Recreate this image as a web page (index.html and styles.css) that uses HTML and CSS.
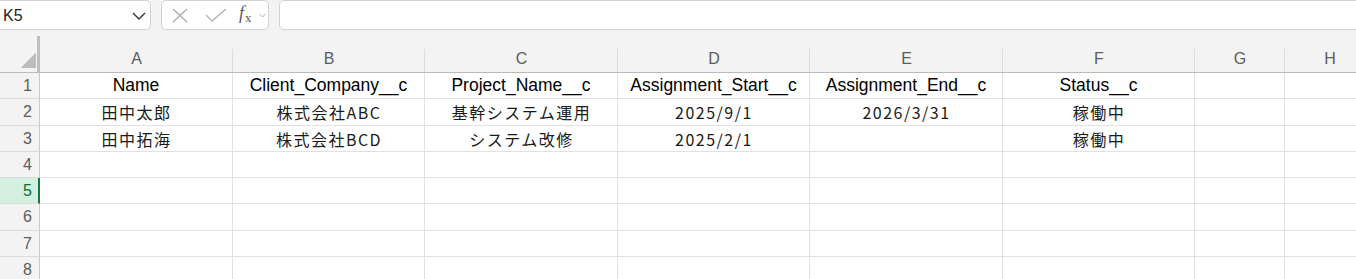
FILE: index.html
```html
<!DOCTYPE html>
<html lang="ja">
<head>
<meta charset="utf-8">
<title>Sheet</title>
<link rel="stylesheet" href="styles.css">
</head>
<body>
<div class="formula-bar">
  <div class="name-box">
    <span class="name-text">K5</span>
    <svg class="name-chevron" width="14" height="8" viewBox="0 0 14 8"><polyline points="1,1 7,7 13,1" fill="none" stroke="#333" stroke-width="1.4"/></svg>
  </div>
  <div class="fx-box">
    <svg class="ic-x" width="16" height="15" viewBox="0 0 16 15"><path d="M1 1 L15 14 M15 1 L1 14" stroke="#adadad" stroke-width="1.3" fill="none"/></svg>
    <svg class="ic-check" width="22" height="15" viewBox="0 0 22 15"><polyline points="1,7 7,13 21,1" fill="none" stroke="#b4b4b4" stroke-width="1.3"/></svg>
    <span class="fx"><i>f</i><sub>x</sub></span>
    <svg class="ic-small" width="7" height="5" viewBox="0 0 7 5"><polyline points="0.5,0.8 3.5,4 6.5,0.8" fill="none" stroke="#b0b0b0" stroke-width="1"/></svg>
  </div>
  <div class="formula-input"></div>
</div>
<div class="sheet">
  <div class="corner"></div>
  <div class="col-h">A</div>
  <div class="col-h">B</div>
  <div class="col-h">C</div>
  <div class="col-h">D</div>
  <div class="col-h">E</div>
  <div class="col-h">F</div>
  <div class="col-h">G</div>
  <div class="col-h">H</div>

  <div class="row-h">1</div>
  <div class="cell head">Name</div>
  <div class="cell head">Client_Company__c</div>
  <div class="cell head">Project_Name__c</div>
  <div class="cell head">Assignment_Start__c</div>
  <div class="cell head">Assignment_End__c</div>
  <div class="cell head">Status__c</div>
  <div class="cell"></div>
  <div class="cell"></div>

  <div class="row-h">2</div>
  <div class="cell jp">田中太郎</div>
  <div class="cell jp">株式会社ABC</div>
  <div class="cell jp">基幹システム運用</div>
  <div class="cell jp">2025/9/1</div>
  <div class="cell jp">2026/3/31</div>
  <div class="cell jp">稼働中</div>
  <div class="cell"></div>
  <div class="cell"></div>

  <div class="row-h">3</div>
  <div class="cell jp">田中拓海</div>
  <div class="cell jp">株式会社BCD</div>
  <div class="cell jp">システム改修</div>
  <div class="cell jp">2025/2/1</div>
  <div class="cell jp"></div>
  <div class="cell jp">稼働中</div>
  <div class="cell"></div>
  <div class="cell"></div>

  <div class="row-h">4</div>
  <div class="cell"></div><div class="cell"></div><div class="cell"></div><div class="cell"></div><div class="cell"></div><div class="cell"></div><div class="cell"></div><div class="cell"></div>

  <div class="row-h active">5</div>
  <div class="cell"></div><div class="cell"></div><div class="cell"></div><div class="cell"></div><div class="cell"></div><div class="cell"></div><div class="cell"></div><div class="cell"></div>

  <div class="row-h">6</div>
  <div class="cell"></div><div class="cell"></div><div class="cell"></div><div class="cell"></div><div class="cell"></div><div class="cell"></div><div class="cell"></div><div class="cell"></div>

  <div class="row-h">7</div>
  <div class="cell"></div><div class="cell"></div><div class="cell"></div><div class="cell"></div><div class="cell"></div><div class="cell"></div><div class="cell"></div><div class="cell"></div>

  <div class="row-h">8</div>
  <div class="cell"></div><div class="cell"></div><div class="cell"></div><div class="cell"></div><div class="cell"></div><div class="cell"></div><div class="cell"></div><div class="cell"></div>
</div>
</body>
</html>
```

FILE: styles.css
```css
* { box-sizing: border-box; }
html, body {
  margin: 0;
  padding: 0;
  background: #ffffff;
  overflow: hidden;
  width: 1356px;
  height: 279px;
}
body {
  font-family: "Liberation Sans", Arial, sans-serif;
  color: #000;
}

.formula-bar {
  height: 36px;
  background: #f3f3f3;
  display: flex;
  align-items: flex-start;
}
.name-box {
  margin-left: -8px;
  width: 159px;
  height: 30px;
  background: #fff;
  border: 1px solid #d2d2d2;
  border-radius: 5px;
  display: flex;
  align-items: center;
  padding-left: 10px;
  padding-right: 3px;
}
.name-text {
  flex: 1;
  font-size: 16px;
  color: #222;
  padding-top: 1px;
}
.name-chevron { margin-right: 1px; margin-top: 2px; }

.fx-box {
  margin-left: 10px;
  width: 108px;
  height: 30px;
  background: #fff;
  border: 1px solid #d2d2d2;
  border-radius: 5px;
  display: flex;
  align-items: center;
  padding-left: 10px;
}
.ic-x { margin-top: 1px; }
.ic-check { margin-left: 17px; }
.fx {
  margin-left: 12px;
  font-family: "Liberation Serif", "Times New Roman", serif;
  font-size: 18px;
  color: #5a5a5a;
  line-height: 1;
  margin-top: -2px;
}
.fx sub {
  font-size: 13px;
  vertical-align: -3px;
  font-style: normal;
  margin-left: 1px;
}
.ic-small { margin-left: 7px; margin-top: 1px; }

.formula-input {
  margin-left: 10px;
  flex: 1;
  margin-right: -8px;
  height: 30px;
  background: #fff;
  border: 1px solid #d2d2d2;
  border-radius: 5px;
}

.sheet {
  display: grid;
  grid-template-columns: 40px 193px 192px 193px 192px 193px 192px 90px 90px;
  grid-template-rows: 37px 26px 27px 26px 26px 26px 27px 26px 26px;
  width: 1405px;
}

.corner {
  background-color: #f3f3f3;
  border-right: 3px solid #bfbfbf;
  border-bottom: 1px solid #bababa;
  background-image: linear-gradient(to bottom right, transparent 50%, #bdbdbd 50%);
  background-size: 15px 15px;
  background-repeat: no-repeat;
  background-position: right 1px bottom 4px;
}

.col-h {
  background-color: #f3f3f3;
  background-image: linear-gradient(#dcdcdc, #dcdcdc);
  background-size: 1px 23px;
  background-position: right bottom;
  background-repeat: no-repeat;
  border-bottom: 1px solid #bababa;
  text-align: center;
  font-size: 16px;
  line-height: 18px;
  padding-top: 14px;
  color: #5c5c5c;
}

.row-h {
  background: #f3f3f3;
  border-right: 1px solid #c9c9c9;
  border-bottom: 1px solid #dadada;
  display: flex;
  align-items: center;
  justify-content: flex-end;
  padding-right: 7px;
  font-size: 16px;
  color: #5c5c5c;
}
.row-h.active {
  background: #d3f0e0;
  border-right: 2px solid #107c41;
  color: #0e6b3a;
  padding-right: 6px;
}

.cell {
  border-right: 1px solid #e1e1e1;
  border-bottom: 1px solid #e1e1e1;
  display: flex;
  align-items: center;
  justify-content: center;
  white-space: nowrap;
  overflow: hidden;
}
.cell.head {
  font-family: "Liberation Sans", Arial, sans-serif;
  font-size: 17.5px;
  color: #000;
}
.cell.jp {
  font-family: "Noto Sans CJK JP", "Noto Sans", sans-serif;
  font-size: 16px;
  letter-spacing: 1.5px;
  color: #1a1a1a;
  padding-left: 1px;
}
```
